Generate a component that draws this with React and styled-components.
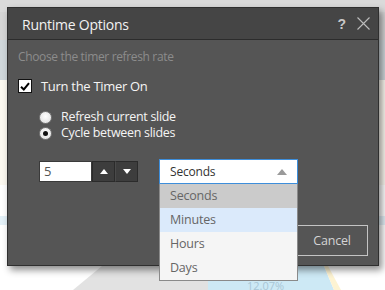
import React from "react";
import styled, { createGlobalStyle } from "styled-components";

const Global = createGlobalStyle`
  html, body { margin: 0; padding: 0; }
  body { font-family: "Open Sans", "Noto Sans", sans-serif; }
`;

const Page = styled.div`
  position: relative;
  width: 385px;
  height: 290px;
  overflow: hidden;
  display: flex;
  flex-direction: column;
  justify-content: flex-end;
  background: linear-gradient(
    to bottom,
    #dadada 0px, #dadada 12px,
    #d5d5d5 12px, #d5d5d5 40px,
    #cfd7db 40px, #cfd7db 80px,
    #fcf9f1 80px, #fcf9f1 185px,
    #ffffff 185px, #ffffff 216px,
    #e4f1f8 216px, #e4f1f8 225px,
    #ffffff 225px
  );
`;

const Chart = styled.svg`
  display: block;
  width: 385px;
  height: 24px;
`;

const Dialog = styled.div`
  position: absolute;
  left: 7px;
  top: 7px;
  width: 372px;
  height: 259px;
  box-sizing: border-box;
  border: 1px solid #2f2f2f;
  background: #555555;
  box-shadow: 3px 4px 7px rgba(0, 0, 0, 0.45);
  display: flex;
  flex-direction: column;
`;

const TitleBar = styled.div`
  height: 31px;
  background: #454545;
  border-bottom: 1px solid #2c2c2c;
  display: flex;
  align-items: center;
  padding: 0 8px 0 14px;
  flex-shrink: 0;
`;

const Title = styled.div`
  flex: 1;
  color: #f2f2f2;
  font-size: 14px;
  letter-spacing: -0.25px;
  padding-top: 1px;
`;

const Help = styled.span`
  color: #c8c8c8;
  font-family: "Liberation Sans", Arial, sans-serif;
  font-weight: bold;
  font-size: 14px;
  margin-right: 11px;
`;

const CloseIcon = styled.svg`
  width: 13px;
  height: 13px;
  display: block;
`;

const Body = styled.div`
  flex: 1;
  display: flex;
  flex-direction: column;
  padding: 9px 10px 0 10px;
`;

const Hint = styled.div`
  color: #8c8c8c;
  font-size: 12px;
  letter-spacing: -0.35px;
  line-height: 16px;
`;

const CheckRow = styled.label`
  display: flex;
  align-items: center;
  margin-top: 12px;
  gap: 9px;
  color: #f4f4f4;
  font-size: 13px;
  letter-spacing: -0.3px;
`;

const CheckBox = styled.span`
  width: 14px;
  height: 14px;
  box-sizing: border-box;
  border: 1px solid #111;
  background: #fff;
  display: flex;
  align-items: center;
  justify-content: center;
`;

const RadioGroup = styled.div`
  display: flex;
  flex-direction: column;
  margin: 15px 0 0 21px;
  gap: 2px;
`;

const RadioRow = styled.label`
  display: flex;
  align-items: center;
  gap: 9px;
  color: #f4f4f4;
  font-size: 12.5px;
  letter-spacing: -0.3px;
  line-height: 14px;
`;

const Radio = styled.span`
  width: 13px;
  height: 13px;
  box-sizing: border-box;
  border-radius: 50%;
  border: 1px solid #7a7a7a;
  background: radial-gradient(circle at 50% 40%, #ffffff, #dcdcdc);
  display: flex;
  align-items: center;
  justify-content: center;
  &::after {
    content: "";
    display: ${(p) => (p.$checked ? "block" : "none")};
    width: 5px;
    height: 5px;
    border-radius: 50%;
    background: #111;
  }
`;

const ControlsRow = styled.div`
  display: flex;
  align-items: center;
  margin: 19px 0 0 21px;
`;

const Spinner = styled.div`
  display: flex;
  height: 21px;
`;

const NumberBox = styled.div`
  width: 53px;
  box-sizing: border-box;
  background: #fff;
  border: 1px solid #3a3a3a;
  color: #555;
  font-size: 13px;
  line-height: 19px;
  padding-left: 4px;
`;

const SpinButton = styled.button`
  width: 23px;
  height: 21px;
  padding: 0;
  background: #3d3d3d;
  border: 1px solid #2b2b2b;
  border-left: ${(p) => (p.$first ? "1px solid #2b2b2b" : "1px solid #4a4a4a")};
  display: flex;
  align-items: center;
  justify-content: center;
`;

const SelectWrap = styled.div`
  position: relative;
  margin-left: 21px;
  width: 139px;
`;

const SelectBox = styled.div`
  height: 25px;
  box-sizing: border-box;
  background: #fff;
  border: 1px solid #3d8edb;
  display: flex;
  align-items: center;
  justify-content: space-between;
  padding: 0 10px 0 10px;
  color: #333;
  font-size: 12px;
  letter-spacing: -0.2px;
`;

const Menu = styled.ul`
  position: absolute;
  top: 25px;
  left: 0;
  width: 139px;
  box-sizing: border-box;
  margin: 0;
  padding: 0;
  list-style: none;
  border: 1px solid #8a8a8a;
  border-top: none;
  background: #f5f5f5;
  z-index: 2;
`;

const MenuItem = styled.li`
  height: 24px;
  line-height: 24px;
  padding-left: 10px;
  color: #666;
  font-size: 12.5px;
  letter-spacing: -0.2px;
  background: ${(p) => (p.$selected ? "#cbcbcb" : p.$hover ? "#dbeafb" : "#f5f5f5")};
`;

const Footer = styled.div`
  display: flex;
  justify-content: flex-end;
  margin-top: 41px;
`;

const Button = styled.button`
  width: 72px;
  height: 31px;
  background: transparent;
  border: 1px solid #c4c4c4;
  color: #d4d4d4;
  font-family: "Open Sans", "Noto Sans", sans-serif;
  font-size: 12.5px;
  letter-spacing: -0.2px;
`;

const Tri = ({ up, color = "#fff", w = 8, h = 5 }) => (
  <svg width={w} height={h} viewBox={`0 0 ${w} ${h}`}>
    <polygon
      points={up ? `0,${h} ${w},${h} ${w / 2},0` : `0,0 ${w},0 ${w / 2},${h}`}
      fill={color}
    />
  </svg>
);

export default function App() {
  return (
    <>
      <Global />
      <Page>
        <Chart viewBox="0 0 385 24">
          <polygon points="102,0 208,0 208,24 73,24" fill="#e2e2e2" />
          <polygon points="208,0 324,0 334,24 208,24" fill="#cde9f5" />
          <polygon points="324,0 328,0 341,24 334,24" fill="#fdf3d2" />
          <text x="247" y="24" fill="#a9c6d6" fontSize="11" fontFamily="Open Sans, sans-serif">
            12.07%
          </text>
        </Chart>
        <Dialog>
          <TitleBar>
            <Title>Runtime Options</Title>
            <Help>?</Help>
            <CloseIcon viewBox="0 0 13 13">
              <path d="M0.5 0.5 L12.5 12.5 M12.5 0.5 L0.5 12.5" stroke="#bdbdbd" strokeWidth="1.1" />
            </CloseIcon>
          </TitleBar>
          <Body>
            <Hint>Choose the timer refresh rate</Hint>
            <CheckRow>
              <CheckBox>
                <svg width="10" height="9" viewBox="0 0 10 9">
                  <path d="M1 4.8 L3.8 7.5 L9 1.2" stroke="#000" strokeWidth="2" fill="none" />
                </svg>
              </CheckBox>
              Turn the Timer On
            </CheckRow>
            <RadioGroup>
              <RadioRow>
                <Radio />
                Refresh current slide
              </RadioRow>
              <RadioRow>
                <Radio $checked />
                Cycle between slides
              </RadioRow>
            </RadioGroup>
            <ControlsRow>
              <Spinner>
                <NumberBox>5</NumberBox>
                <SpinButton $first>
                  <Tri up />
                </SpinButton>
                <SpinButton>
                  <Tri />
                </SpinButton>
              </Spinner>
              <SelectWrap>
                <SelectBox>
                  Seconds
                  <Tri up color="#9a9a9a" w={10} h={6} />
                </SelectBox>
                <Menu>
                  <MenuItem $selected>Seconds</MenuItem>
                  <MenuItem $hover>Minutes</MenuItem>
                  <MenuItem>Hours</MenuItem>
                  <MenuItem>Days</MenuItem>
                </Menu>
              </SelectWrap>
            </ControlsRow>
            <Footer>
              <Button>Cancel</Button>
            </Footer>
          </Body>
        </Dialog>
      </Page>
    </>
  );
}
